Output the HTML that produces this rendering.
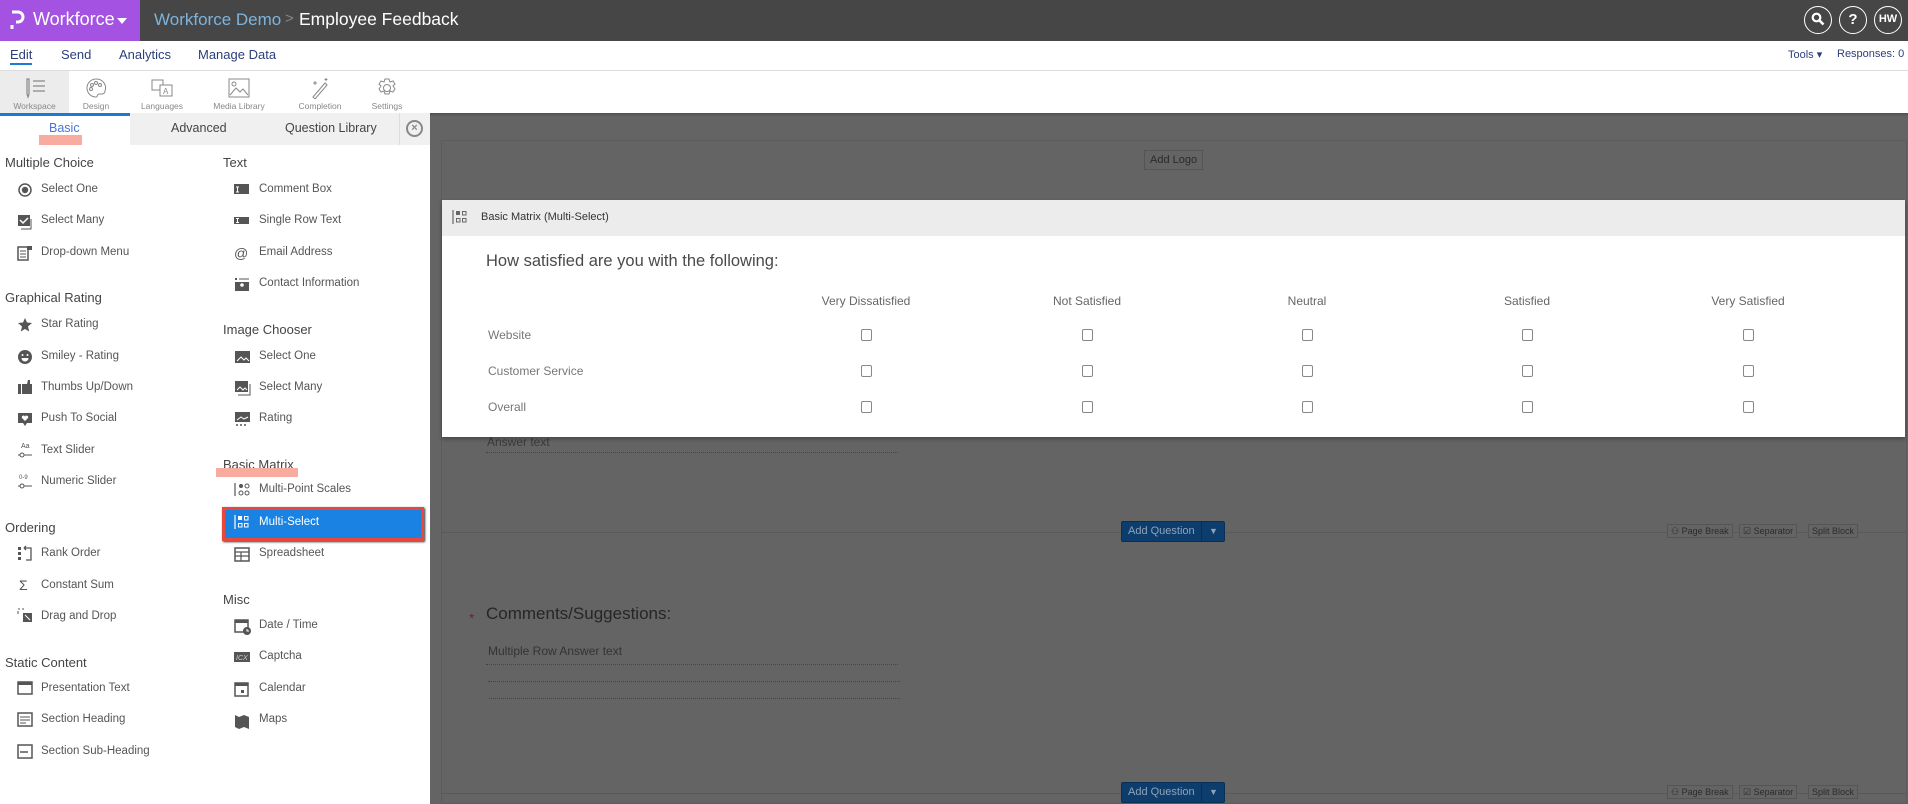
<!DOCTYPE html>
<html><head><meta charset="utf-8">
<style>
*{box-sizing:border-box;margin:0;padding:0}
body{width:1908px;height:804px;overflow:hidden;position:relative;font-family:"Liberation Sans",sans-serif;background:#fff}
.a{position:absolute;white-space:nowrap}
.top{left:0;top:0;width:1908px;height:41px;background:#464646}
.circ{width:28px;height:28px;border:1.5px solid #fff;border-radius:50%;top:6px;color:#fff;font-weight:bold;font-size:11px;text-align:center;line-height:25px}
.nav{font-size:13px;color:#2b3f7a;top:47px}
.tb{top:71px;height:42px;text-align:center;font-size:8.5px;color:#888}
.tb svg{display:block;margin:6px auto 2px}
.h{font-size:13px;color:#444}
.it{font-size:11.5px;color:#555}
.main{left:430px;top:113px;width:1478px;height:691px;background:#646464}
.mb{font-size:11px;color:#2a2a2a;border:1px solid #555;padding:3px 5px}
.cb{position:absolute;width:11px;height:12px;border:1px solid #888;border-radius:2px;background:#fff}
.ch{font-size:12px;color:#666;top:294px;transform:translateX(-50%)}
.rl{font-size:12px;color:#777;left:488px}
.aq{height:21px;background:#0d3d6c;border:1px solid #0a2f55;border-radius:2px;color:#8fa3b8;font-size:11px;line-height:19px}
.sb{height:14px;border:1px solid #555;font-size:9px;color:#2b2b2b;line-height:12px;padding:0 3px;background:#646464}
.dot{border-top:1px dotted #444;height:0}
</style></head><body>

<div class="a top"></div>
<div class="a" style="left:0;top:0;width:140px;height:41px;background:#a452e2"></div>
<svg class="a" style="left:9px;top:10px" width="16" height="22" viewBox="0 0 16 22"><path d="M3 2h6a5 5 0 0 1 0 10H7" stroke="#fff" stroke-width="3" fill="none"/><rect x="1.5" y="15" width="3" height="4" fill="#fff"/></svg>
<div class="a" style="left:33px;top:9px;font-size:18px;color:#fff">Workforce</div>
<div class="a" style="left:117px;top:18px;width:0;height:0;border-left:5px solid transparent;border-right:5px solid transparent;border-top:6px solid #fff"></div>
<div class="a" style="left:154px;top:10px;font-size:17px;color:#7db4dd">Workforce Demo</div>
<div class="a" style="left:285px;top:10px;font-size:15px;color:#888">&gt;</div>
<div class="a" style="left:299px;top:9px;font-size:17.5px;color:#fff">Employee Feedback</div>
<div class="a circ" style="left:1804px"><svg width="14" height="14" viewBox="0 0 14 14" style="margin-top:5px"><circle cx="5.5" cy="5.5" r="3.8" stroke="#fff" stroke-width="2.2" fill="none"/><path d="M8.5 8.5l4 4" stroke="#fff" stroke-width="2.6"/></svg></div>
<div class="a circ" style="left:1839px;font-size:15px">?</div>
<div class="a circ" style="left:1874px">HW</div>

<div class="a nav" style="left:10px">Edit</div>
<div class="a" style="left:10px;top:63px;width:22px;height:2px;background:#1a7ad4"></div>
<div class="a nav" style="left:61px">Send</div>
<div class="a nav" style="left:119px">Analytics</div>
<div class="a nav" style="left:198px">Manage Data</div>
<div class="a" style="left:1788px;top:48px;font-size:11px;color:#2b3f7a">Tools &#9662;</div>
<div class="a" style="left:1837px;top:48px;font-size:11px;color:#2b3f7a">Responses: 0</div>
<div class="a" style="left:0;top:70px;width:1908px;height:1px;background:#ddd"></div>

<div class="a tb" style="left:0;width:69px;background:#ececec"><svg width="24" height="22" viewBox="0 0 24 22"><path d="M4 2v15l1 3 1-3V2zM10 4h12M10 9h12M10 14h12" stroke="#888" stroke-width="1.2" fill="none"/></svg>Workspace</div>
<div class="a tb" style="left:72px;width:48px"><svg width="22" height="22" viewBox="0 0 22 22"><path d="M11 2a9 9 0 1 0 0 18c2 0 1-3 3-3h3a3 3 0 0 0 3-3 9 9 0 0 0-9-12z" stroke="#888" fill="none"/><circle cx="7" cy="8" r="1.5" stroke="#888" fill="none"/><circle cx="11" cy="6" r="1.5" stroke="#888" fill="none"/><circle cx="15" cy="8" r="1.5" stroke="#888" fill="none"/><circle cx="6" cy="12" r="1.5" stroke="#888" fill="none"/></svg>Design</div>
<div class="a tb" style="left:136px;width:52px"><svg width="24" height="22" viewBox="0 0 24 22"><rect x="2" y="3" width="11" height="10" stroke="#888" fill="none"/><rect x="10" y="8" width="12" height="11" stroke="#888" fill="#fff"/><text x="13" y="17" font-size="8" fill="#888">A</text></svg>Languages</div>
<div class="a tb" style="left:208px;width:62px"><svg width="24" height="22" viewBox="0 0 24 22"><rect x="2" y="2" width="20" height="18" stroke="#888" fill="none"/><path d="M3 18l6-7 4 4 3-3 5 6" stroke="#888" fill="none"/><circle cx="7" cy="7" r="2" stroke="#888" fill="none"/></svg>Media Library</div>
<div class="a tb" style="left:292px;width:56px"><svg width="22" height="22" viewBox="0 0 22 22"><path d="M4 20l12-14 2 2L6 22z" stroke="#888" fill="none"/><path d="M6 4v4M4 6h4M17 1v3M15.5 2.5h3" stroke="#888"/></svg>Completion</div>
<div class="a tb" style="left:365px;width:44px"><svg width="22" height="22" viewBox="0 0 22 22"><path d="M9 2h4l1 3 3-1 2 3-2 2 2 3-2 3-3-1-1 3H9l-1-3-3 1-2-3 2-3-2-2 2-3 3 1z" stroke="#888" fill="none"/><circle cx="11" cy="11" r="3.5" stroke="#888" fill="none"/></svg>Settings</div>

<div class="a" style="left:0;top:113px;width:430px;height:691px;background:#fff"></div>
<div class="a" style="left:130px;top:113px;width:300px;height:32px;background:#f0f0f0"></div>
<div class="a" style="left:399px;top:113px;width:1px;height:32px;background:#ddd"></div>
<div class="a" style="left:0;top:113px;width:130px;height:3px;background:#1a7ad4"></div>
<div class="a" style="left:39px;top:135px;width:43px;height:10px;background:#f8aca0"></div>
<div class="a" style="left:49px;top:121px;font-size:12.5px;color:#4b73d6">Basic</div>
<div class="a" style="left:171px;top:121px;font-size:12.5px;color:#444">Advanced</div>
<div class="a" style="left:285px;top:121px;font-size:12.5px;color:#444">Question Library</div>
<div class="a" style="left:406px;top:120px;width:17px;height:17px;border:2px solid #888;border-radius:50%;font-size:11px;line-height:12px;text-align:center;color:#888;font-weight:bold">×</div>

<div class="a h" style="left:5px;top:155px">Multiple Choice</div>
<div class="a h" style="left:5px;top:290px">Graphical Rating</div>
<div class="a h" style="left:5px;top:520px">Ordering</div>
<div class="a h" style="left:5px;top:655px">Static Content</div>
<div class="a h" style="left:223px;top:155px">Text</div>
<div class="a h" style="left:223px;top:322px">Image Chooser</div>
<div class="a h" style="left:223px;top:457px">Basic Matrix</div>
<div class="a" style="left:216px;top:468px;width:82px;height:9px;background:#f8aca0"></div>
<div class="a h" style="left:223px;top:592px">Misc</div>

<div class="a" style="left:222px;top:507px;width:202px;height:34px;background:#1a82e2;border:3px solid #e8473c;box-shadow:1px 1px 2px #333"></div>

<svg class="a" style="left:0;top:0" width="430" height="804">
<g fill="#555" stroke="#555">
<circle cx="25" cy="190" r="6" fill="none" stroke-width="1.5"/><circle cx="25" cy="190" r="3.2" stroke="none"/>
<rect x="18" y="215" width="12" height="11" stroke="none"/><path d="M31 219v10H21" fill="none"/><path d="M20 220l3 3 5-5" stroke="#fff" stroke-width="1.5" fill="none"/>
<rect x="18" y="247" width="10" height="13" fill="none" stroke-width="1.5"/><rect x="27" y="246" width="5" height="4" stroke="none"/><path d="M20 251h6M20 254h6M20 257h6" stroke-width="1"/>
<path d="M25 318l2 4.5 5 .5-4 3.5 1.2 5L25 329l-4.2 2.5 1.2-5-4-3.5 5-.5z" stroke="none"/>
<circle cx="25" cy="357" r="7" stroke="none"/><circle cx="22.5" cy="355" r="1" fill="#fff" stroke="none"/><circle cx="27.5" cy="355" r="1" fill="#fff" stroke="none"/><path d="M21.5 358a3.5 3.5 0 0 0 7 0z" fill="#fff" stroke="none"/>
<rect x="18" y="384" width="3" height="10" stroke="none"/><path d="M22 384h5l1-4h2v4h2v10h-10z" stroke="none"/>
<path d="M18 413h14v10h-5l-2 3-2-3h-5z" stroke="none"/><path d="M25 421l-3-3a1.5 1.5 0 0 1 3-1.5 1.5 1.5 0 0 1 3 1.5z" fill="#fff" stroke="none"/>
<text x="21" y="448" font-size="7" stroke="none">Aa</text><path d="M18 455h14" fill="none"/><circle cx="22" cy="455" r="2" fill="#fff"/>
<text x="19" y="479" font-size="6" stroke="none">0-9</text><path d="M18 486h14" fill="none"/><circle cx="22" cy="486" r="2" fill="#fff"/>
<rect x="18" y="547" width="3" height="3" stroke="none"/><rect x="18" y="552" width="3" height="3" stroke="none"/><rect x="18" y="557" width="3" height="3" stroke="none"/><path d="M24 548h7v12h-5M24 548l2-2M24 548l2 2" fill="none" stroke-width="1.3"/>
<text x="19" y="590" font-size="14" stroke="none">Σ</text>
<path d="M18 611v3M22 609h2M18 609h2" fill="none"/><rect x="23" y="613" width="9" height="9" stroke="none"/><path d="M25 615l5 5" stroke="#fff"/>
<rect x="18" y="682" width="14" height="12" fill="none" stroke-width="1.5"/><rect x="18" y="682" width="14" height="3" stroke="none"/>
<rect x="18" y="713" width="14" height="13" fill="none" stroke-width="1.5"/><path d="M20 717h10M20 720h10M20 723h6" stroke-width="1"/>
<rect x="18" y="745" width="14" height="13" fill="none" stroke-width="1.5"/><path d="M20 752h8" stroke-width="1.5"/>
<rect x="234" y="184" width="15" height="10" stroke="none"/><path d="M236 187h3M237.5 187v5M236 192h3" stroke="#fff" stroke-width="1"/>
<rect x="234" y="217" width="15" height="7" stroke="none"/><path d="M236 218.5h3M237.5 218.5v4M236 222.5h3" stroke="#fff" stroke-width="1"/>
<text x="234" y="258" font-size="14" stroke="none">@</text>
<rect x="235" y="278" width="2" height="2" stroke="none"/><path d="M239 279h10" /><rect x="235" y="282" width="14" height="9" stroke="none"/><circle cx="242" cy="285" r="1.8" fill="#fff" stroke="none"/>
<rect x="235" y="351" width="15" height="12" stroke="none"/><path d="M237 361l4-4 3 3 2-2 3 3" stroke="#fff" fill="none"/>
<rect x="235" y="381" width="13" height="11" stroke="none"/><path d="M250 384v11h-12" fill="none"/><path d="M237 390l3-3 3 3 2-2 2 2" stroke="#fff" fill="none"/>
<rect x="235" y="412" width="15" height="10" stroke="none"/><path d="M237 420l4-3 3 2 4-2" stroke="#fff" fill="none"/><path d="M236 425h2M240 425h2M244 425h2" stroke-width="1.5"/>
<path d="M235 483v13" stroke-width="1.2"/><circle cx="241" cy="486" r="2" stroke="none"/><circle cx="247" cy="486" r="2" fill="none"/><circle cx="241" cy="493" r="2" fill="none"/><circle cx="247" cy="493" r="2" fill="none"/>
<rect x="235" y="548" width="14" height="13" fill="none" stroke-width="1.5"/><path d="M235 552h14M235 556h14M241 552v9" stroke-width="1.2"/>
<rect x="235" y="620" width="13" height="12" fill="none" stroke-width="1.5"/><rect x="235" y="620" width="13" height="3" stroke="none"/><circle cx="247" cy="631" r="4" stroke="none"/><path d="M247 629v2h2" stroke="#fff" fill="none"/>
<rect x="234" y="652" width="16" height="10" stroke="none"/><text x="236" y="660" font-size="7" fill="#ccc" stroke="none" font-style="italic">ICX</text>
<rect x="235" y="683" width="13" height="13" fill="none" stroke-width="1.5"/><rect x="235" y="683" width="13" height="3" stroke="none"/><rect x="241" y="690" width="3" height="3" stroke="none"/>
<path d="M235 715l4 2 5-2 5 2v12l-5-2-5 2-4-2z" stroke="none"/>
</g>
<g fill="#fff" stroke="#fff"><path d="M235 515v14" stroke-width="1.2"/><rect x="238" y="516" width="4" height="4" stroke="none"/><rect x="244.5" y="516.5" width="3.5" height="3.5" fill="none"/><rect x="238.5" y="523.5" width="3.5" height="3.5" fill="none"/><rect x="244.5" y="523.5" width="3.5" height="3.5" fill="none"/></g>
</svg>

<div class="a it" style="left:41px;top:183px">Select One</div>
<div class="a it" style="left:41px;top:214px">Select Many</div>
<div class="a it" style="left:41px;top:246px">Drop-down Menu</div>
<div class="a it" style="left:41px;top:318px">Star Rating</div>
<div class="a it" style="left:41px;top:350px">Smiley - Rating</div>
<div class="a it" style="left:41px;top:381px">Thumbs Up/Down</div>
<div class="a it" style="left:41px;top:412px">Push To Social</div>
<div class="a it" style="left:41px;top:444px">Text Slider</div>
<div class="a it" style="left:41px;top:475px">Numeric Slider</div>
<div class="a it" style="left:41px;top:547px">Rank Order</div>
<div class="a it" style="left:41px;top:579px">Constant Sum</div>
<div class="a it" style="left:41px;top:610px">Drag and Drop</div>
<div class="a it" style="left:41px;top:682px">Presentation Text</div>
<div class="a it" style="left:41px;top:713px">Section Heading</div>
<div class="a it" style="left:41px;top:745px">Section Sub-Heading</div>
<div class="a it" style="left:259px;top:183px">Comment Box</div>
<div class="a it" style="left:259px;top:214px">Single Row Text</div>
<div class="a it" style="left:259px;top:246px">Email Address</div>
<div class="a it" style="left:259px;top:277px">Contact Information</div>
<div class="a it" style="left:259px;top:350px">Select One</div>
<div class="a it" style="left:259px;top:381px">Select Many</div>
<div class="a it" style="left:259px;top:412px">Rating</div>
<div class="a it" style="left:259px;top:483px">Multi-Point Scales</div>
<div class="a it" style="left:259px;top:516px;color:#fff">Multi-Select</div>
<div class="a it" style="left:259px;top:547px">Spreadsheet</div>
<div class="a it" style="left:259px;top:619px">Date / Time</div>
<div class="a it" style="left:259px;top:650px">Captcha</div>
<div class="a it" style="left:259px;top:682px">Calendar</div>
<div class="a it" style="left:259px;top:713px">Maps</div>

<div class="a main"></div>
<div class="a" style="left:430px;top:113px;width:1478px;height:4px;background:linear-gradient(#505050,#646464)"></div>
<div class="a" style="left:441px;top:140px;width:1466px;height:664px;border:1px solid #5c5c5c;background:#646464"></div>
<div class="a mb" style="left:1144px;top:150px">Add Logo</div>
<div class="a" style="left:487px;top:195px;font-size:32px;color:#14385e">Employee Feedback Survey 2021</div>
<div class="a" style="left:487px;top:435px;font-size:12px;color:#3a3a3a">Answer text</div>
<div class="a dot" style="left:486px;top:452px;width:412px"></div>

<div class="a" style="left:441px;top:532px;width:1466px;height:1px;background:#595959"></div>
<div class="a aq" style="left:1121px;top:521px;width:104px"><span style="padding-left:6px">Add Question</span><span style="position:absolute;left:79px;top:0;height:19px;border-left:1px solid #0a2f55;width:24px;text-align:center;font-size:9px">▼</span></div>
<div class="a sb" style="left:1667px;top:524px">⚇ Page Break</div>
<div class="a sb" style="left:1739px;top:524px">☑ Separator</div>
<div class="a sb" style="left:1808px;top:524px">Split Block</div>

<div class="a" style="left:469px;top:610px;font-size:14px;color:#8b1a1a">*</div>
<div class="a" style="left:486px;top:604px;font-size:17px;color:#262626">Comments/Suggestions:</div>
<div class="a" style="left:488px;top:644px;font-size:12px;color:#333">Multiple Row Answer text</div>
<div class="a dot" style="left:486px;top:664px;width:412px"></div>
<div class="a dot" style="left:488px;top:681px;width:412px"></div>
<div class="a dot" style="left:489px;top:698px;width:411px"></div>

<div class="a" style="left:441px;top:793px;width:1466px;height:1px;background:#595959"></div>
<div class="a aq" style="left:1121px;top:782px;width:104px"><span style="padding-left:6px">Add Question</span><span style="position:absolute;left:79px;top:0;height:19px;border-left:1px solid #0a2f55;width:24px;text-align:center;font-size:9px">▼</span></div>
<div class="a sb" style="left:1667px;top:785px">⚇ Page Break</div>
<div class="a sb" style="left:1739px;top:785px">☑ Separator</div>
<div class="a sb" style="left:1808px;top:785px">Split Block</div>

<div class="a" style="left:442px;top:200px;width:1463px;height:237px;background:#fff;box-shadow:0 2px 4px rgba(0,0,0,.3)"></div>
<div class="a" style="left:442px;top:200px;width:1463px;height:36px;background:#ececec"></div>
<svg class="a" style="left:452px;top:209px" width="16" height="16" viewBox="0 0 16 16"><path d="M1 1v14" stroke="#666" stroke-width="1.2"/><rect x="4" y="2" width="4" height="4" fill="#666"/><rect x="10.5" y="2.5" width="3.5" height="3.5" fill="none" stroke="#666"/><rect x="4.5" y="9.5" width="3.5" height="3.5" fill="none" stroke="#666"/><rect x="10.5" y="9.5" width="3.5" height="3.5" fill="none" stroke="#666"/></svg>
<div class="a" style="left:481px;top:211px;font-size:11px;color:#333">Basic Matrix (Multi-Select)</div>
<div class="a" style="left:486px;top:252px;font-size:16.5px;color:#4a4a4a">How satisfied are you with the following:</div>
<div class="a ch" style="left:866px">Very Dissatisfied</div>
<div class="a ch" style="left:1087px">Not Satisfied</div>
<div class="a ch" style="left:1307px">Neutral</div>
<div class="a ch" style="left:1527px">Satisfied</div>
<div class="a ch" style="left:1748px">Very Satisfied</div>
<div class="a rl" style="top:328px">Website</div>
<div class="a rl" style="top:364px">Customer Service</div>
<div class="a rl" style="top:400px">Overall</div>
<div class="cb" style="left:861px;top:329px"></div><div class="cb" style="left:1082px;top:329px"></div><div class="cb" style="left:1302px;top:329px"></div><div class="cb" style="left:1522px;top:329px"></div><div class="cb" style="left:1743px;top:329px"></div>
<div class="cb" style="left:861px;top:365px"></div><div class="cb" style="left:1082px;top:365px"></div><div class="cb" style="left:1302px;top:365px"></div><div class="cb" style="left:1522px;top:365px"></div><div class="cb" style="left:1743px;top:365px"></div>
<div class="cb" style="left:861px;top:401px"></div><div class="cb" style="left:1082px;top:401px"></div><div class="cb" style="left:1302px;top:401px"></div><div class="cb" style="left:1522px;top:401px"></div><div class="cb" style="left:1743px;top:401px"></div>
</body></html>
